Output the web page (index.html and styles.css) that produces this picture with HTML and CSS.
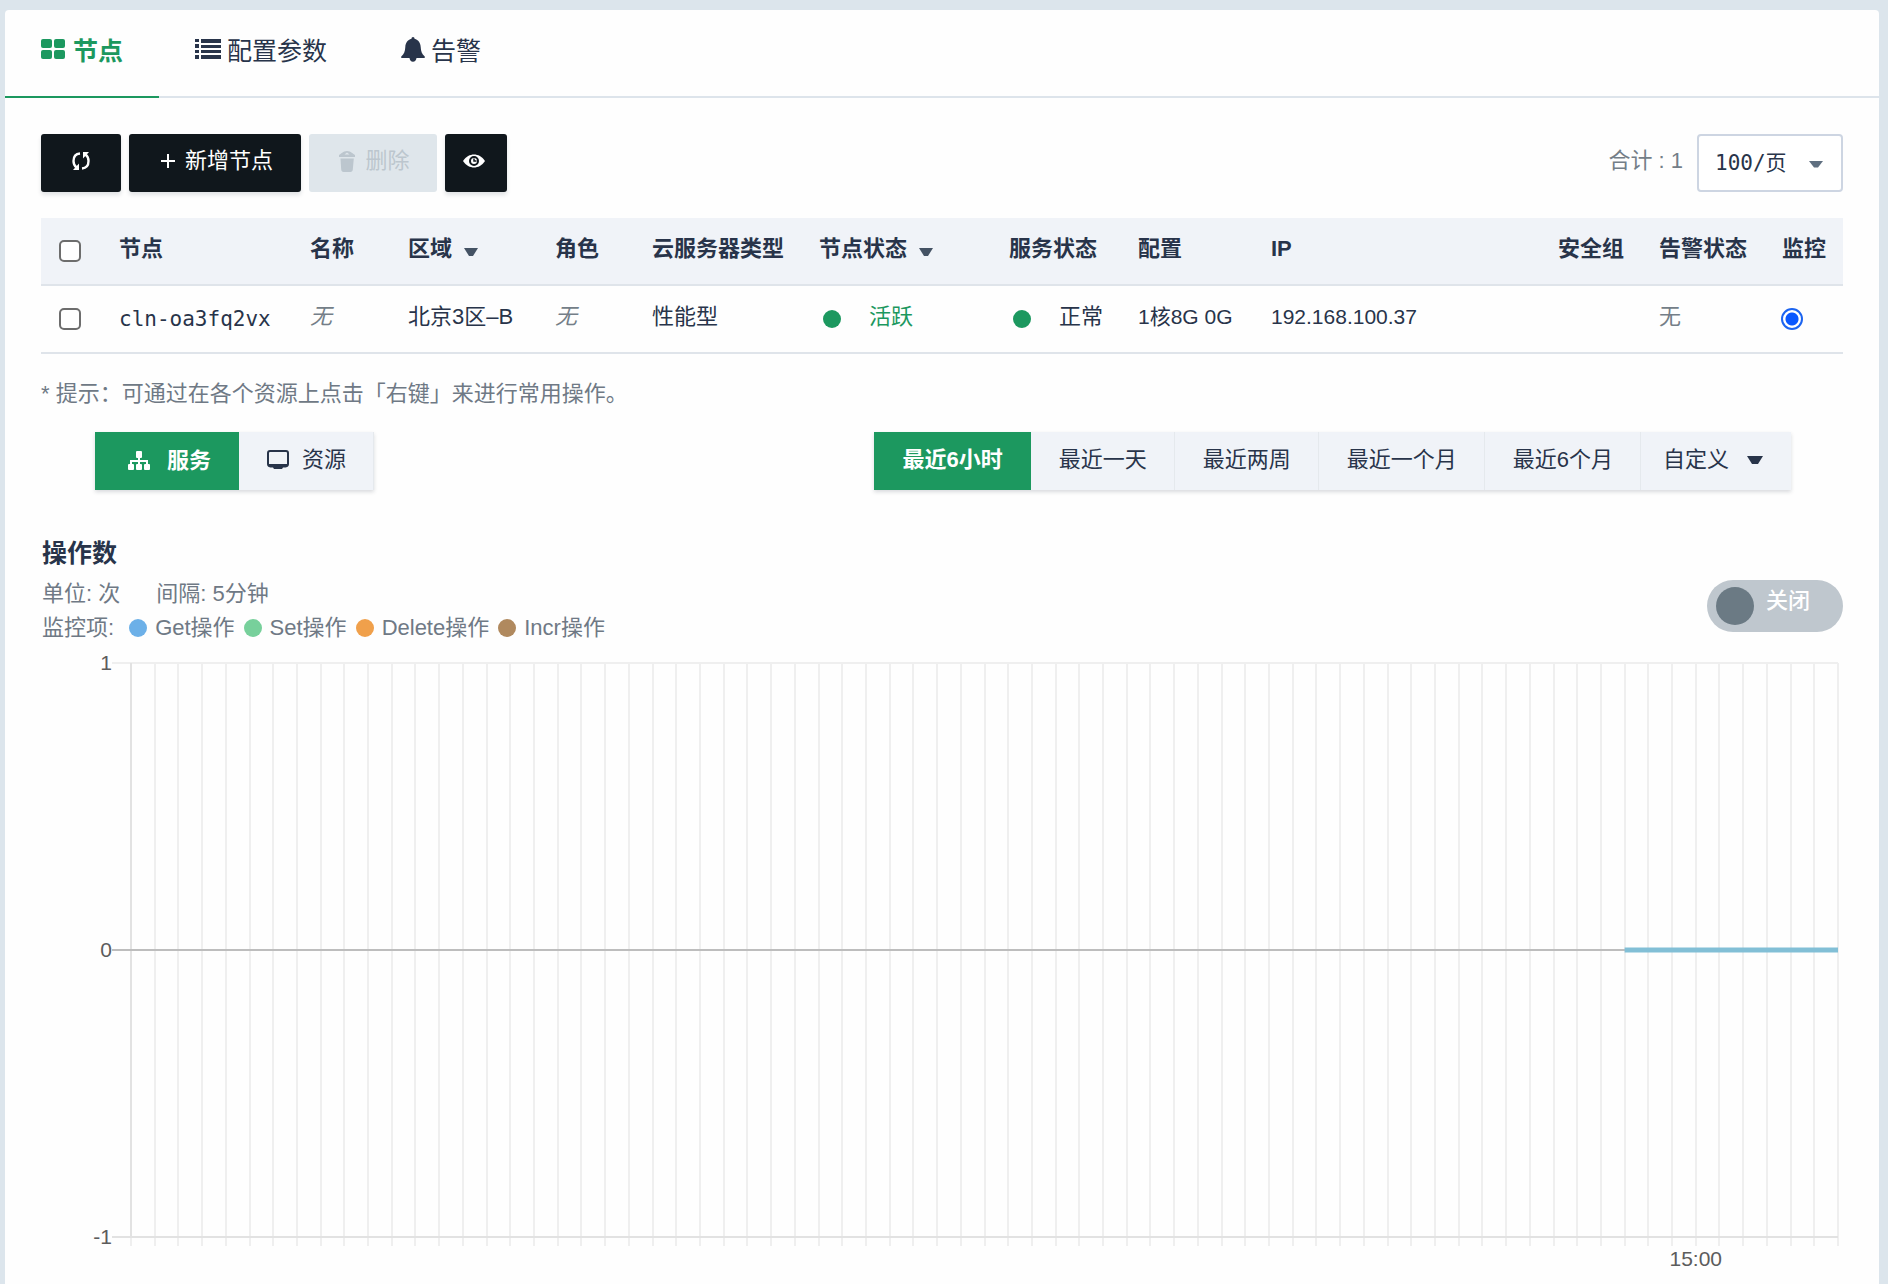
FILE: index.html
```html
<!DOCTYPE html>
<html lang="zh-CN">
<head>
<meta charset="utf-8">
<meta name="viewport" content="width=device-width, initial-scale=1">
<title>节点</title>
<link rel="stylesheet" href="styles.css">
</head>
<body>
<main class="card">
  <nav class="tabs">
    <a class="tab tab-active" href="#nodes">
      <svg class="tab-icon" viewBox="0 0 26 26" fill="currentColor"><rect x="0" y="2" width="11" height="9" rx="2"/><rect x="13" y="2" width="11" height="9" rx="2"/><rect x="0" y="13" width="11" height="9" rx="2"/><rect x="13" y="13" width="11" height="9" rx="2"/></svg>
      <span>节点</span>
    </a>
    <a class="tab" href="#params">
      <svg class="tab-icon" viewBox="0 0 26 26" fill="currentColor"><path d="M0 2h4v3H0zM6 2h20v4H6zM0 7h4v4H0zM6 8h20v3H6zM0 13h4v3H0zM6 13h20v3H6zM0 18h4v4H0zM6 18h20v4H6z"/></svg>
      <span>配置参数</span>
    </a>
    <a class="tab" href="#alarms">
      <svg class="tab-icon" viewBox="0 0 26 26" fill="currentColor"><path d="M14 0c1 0 1.500.7 1.500 1.800C19.500 3 21.500 6 21.700 10c.2 4.500 1.300 7 3.800 9.200.8.800.5 1.800-.5 1.800h-7.500c-.3 2.200-1.600 3.800-3.500 3.800S10.800 23.200 10.500 21H3c-1 0-1.300-1-.5-1.800C5 17 6.100 14.500 6.300 10c.2-4 2.200-7 6.200-8.200C12.500.7 13 0 14 0z"/></svg>
      <span>告警</span>
    </a>
  </nav>

  <div class="content">
    <div class="toolbar">
      <button class="btn btn-refresh" type="button" aria-label="刷新">
        <svg class="icon-sm" viewBox="0 0 20 20" fill="none" stroke="currentColor" stroke-width="2.400"><path d="M9 2.500C4 3 2.500 6.500 2.500 10c0 2.800 1 5 3 6.500"/><path d="M11 17.500c5-.5 6.500-4 6.500-7.500 0-2.800-1-5-3-6.500"/><path d="M8 12.500V19H2zM12 7.500V1h6z" fill="currentColor" stroke="none"/></svg>
      </button>
      <button class="btn btn-add" type="button">
        <svg class="icon-plus" viewBox="0 0 14 14" stroke="currentColor" stroke-width="2"><path d="M7 0v14M0 7h14"/></svg>
        <span>新增节点</span>
      </button>
      <button class="btn btn-delete" type="button" disabled>
        <svg class="icon-trash" viewBox="0 0 18 22" fill="currentColor"><path d="M1 5C3 4 5 1 9 1s6 3 8 4v2H1zM2.500 8.500h13.300l-1 11c-.1 1.500-1 2.500-2.300 2.500h-7c-1.300 0-2.200-1-2.300-2.500z"/><path d="M6.500 4.500 9 2.500l2.500 2z" fill="#dfe6eb"/></svg>
        <span>删除</span>
      </button>
      <button class="btn btn-view" type="button" aria-label="显示列">
        <svg class="icon-eye" viewBox="0 0 22 16"><path d="M0 8c3-4.500 7-6.500 11-6.500S19 3.500 22 8c-3 4.500-7 6.500-11 6.500S3 12.500 0 8z" fill="currentColor"/><circle cx="11" cy="8" r="4" fill="none" stroke="#10171c" stroke-width="2"/><path d="M11 5.500V8h2.500" fill="none" stroke="#10171c" stroke-width="1.500"/></svg>
      </button>
      <label class="total" for="page-size">合计 : 1</label>
      <span class="select-box">
        <select class="select" id="page-size"><option>100/页</option></select>
        <svg class="select-caret" viewBox="0 0 14 8" fill="currentColor"><path d="M0 0h14L9 6.500H5z"/></svg>
      </span>
    </div>

    <table class="nodes">
      <colgroup>
        <col class="c-check"><col class="c-node"><col class="c-name"><col class="c-zone"><col class="c-role"><col class="c-type"><col class="c-state"><col class="c-service"><col class="c-config"><col class="c-ip"><col class="c-group"><col class="c-alarm"><col class="c-monitor">
      </colgroup>
      <thead>
        <tr>
          <th><input class="check" type="checkbox" aria-label="全选"></th>
          <th>节点</th>
          <th>名称</th>
          <th>区域<svg class="sort-caret" viewBox="0 0 14 8" fill="currentColor"><path d="M0 0h14L9 8H5z"/></svg></th>
          <th>角色</th>
          <th>云服务器类型</th>
          <th>节点状态<svg class="sort-caret" viewBox="0 0 14 8" fill="currentColor"><path d="M0 0h14L9 8H5z"/></svg></th>
          <th>服务状态</th>
          <th>配置</th>
          <th>IP</th>
          <th>安全组</th>
          <th>告警状态</th>
          <th>监控</th>
        </tr>
      </thead>
      <tbody>
        <tr>
          <td><input class="check" type="checkbox" aria-label="选择 cln-oa3fq2vx"></td>
          <td class="mono">cln-oa3fq2vx</td>
          <td class="muted"><em>无</em></td>
          <td>北京3区–B</td>
          <td class="muted"><em>无</em></td>
          <td>性能型</td>
          <td><span class="status status-active">活跃</span></td>
          <td><span class="status">正常</span></td>
          <td class="num">1核8G 0G</td>
          <td class="num">192.168.100.37</td>
          <td></td>
          <td class="muted">无</td>
          <td><input class="radio" type="radio" name="monitor" aria-label="监控 cln-oa3fq2vx" checked></td>
        </tr>
      </tbody>
    </table>

    <p class="hint">* 提示：可通过在各个资源上点击「右键」来进行常用操作。</p>

    <div class="filters">
      <div class="segments">
        <button class="segment segment-active seg-service" type="button">
          <svg class="icon-md" viewBox="0 0 22 20" fill="currentColor"><rect x="8" y="0" width="6" height="7" rx="1"/><rect x="0" y="13" width="6" height="6" rx="1"/><rect x="8" y="13" width="6" height="6" rx="1"/><rect x="16" y="13" width="6" height="6" rx="1"/><path d="M3 13v-3h16v3M11 6v7" fill="none" stroke="currentColor" stroke-width="2"/></svg>
          <span>服务</span>
        </button>
        <button class="segment seg-resource" type="button">
          <svg class="icon-md" viewBox="0 0 22 20"><rect x="1" y="1" width="20" height="15" rx="2" fill="none" stroke="currentColor" stroke-width="2"/><path d="M1 14h20v1c0 1.500-1 2.500-2.500 2.500H16l-1 1.500H7l-1-1.500H3.500C2 17.500 1 16.500 1 15z" fill="currentColor"/></svg>
          <span>资源</span>
        </button>
      </div>
      <div class="segments">
        <button class="segment segment-active" type="button">最近6小时</button>
        <button class="segment" type="button">最近一天</button>
        <button class="segment" type="button">最近两周</button>
        <button class="segment" type="button">最近一个月</button>
        <button class="segment" type="button">最近6个月</button>
        <button class="segment seg-custom" type="button"><span>自定义</span><svg class="custom-caret" viewBox="0 0 16 8" fill="currentColor"><path d="M0 0h16l-5 8H5z"/></svg></button>
      </div>
    </div>

    <section class="monitor">
      <header class="monitor-head">
        <div>
          <h2 class="monitor-title">操作数</h2>
          <p class="meta"><span>单位: 次</span><span class="interval">间隔: 5分钟</span></p>
          <p class="meta">
            <span class="legend-label">监控项:</span>
            <span class="legend legend-get">Get操作</span>
            <span class="legend legend-set">Set操作</span>
            <span class="legend legend-delete">Delete操作</span>
            <span class="legend legend-incr">Incr操作</span>
          </p>
        </div>
        <button class="switch" type="button" role="switch" aria-checked="false"><span class="knob"></span><span class="switch-text">关闭</span></button>
      </header>
      <svg class="chart" id="chart" role="img" aria-label="操作数">
        <g id="grid" class="grid"></g>
        <line class="h-line" x1="-19" x2="100%" y1="12" y2="12"/>
        <line class="h-line axis" x1="-19" x2="100%" y1="586" y2="586"/>
        <line class="v-axis" x1="0" x2="0" y1="12" y2="586"/>
        <line class="zero" x1="-19" x2="100%" y1="299" y2="299"/>
        <line class="series" x1="87.5%" x2="100%" y1="299" y2="299"/>
        <text class="label label-y" x="-19" y="19">1</text>
        <text class="label label-y" x="-19" y="306">0</text>
        <text class="label label-y" x="-19" y="593">-1</text>
        <text class="label label-x" x="91.667%" y="615">15:00</text>
      </svg>
    </section>
  </div>
</main>
<script src="chart.js"></script>
</body>
</html>
```
FILE: styles.css
```css
* { box-sizing: border-box; }

body {
  margin: 0;
  padding: 10px 9px 0 5px;
  background: #dce5ec;
  color: #28344a;
  font: 22px/30px "Liberation Sans", "Noto Sans CJK SC", sans-serif;
}

button, select { font: inherit; color: inherit; }
svg { flex: none; display: block; }

.card {
  min-height: calc(100vh - 10px);
  background: #fefefe;
  border-radius: 4px 4px 0 0;
}

/* Tabs */
.tabs {
  display: flex;
  height: 88px;
  border-bottom: 2px solid #dde4eb;
}
.tab {
  display: flex;
  gap: 6px;
  height: 88px;
  padding: 23px 36px 0;
  border-bottom: 2px solid transparent;
  color: #28344a;
  font-size: 25px;
  line-height: 36px;
  text-decoration: none;
}
.tab-active { color: #1c985f; border-color: #1c985f; font-weight: 700; }
.tab-icon { width: 26px; height: 26px; margin-top: 4px; }

.content { padding: 36px 36px 12px; }

/* Toolbar */
.toolbar { display: flex; align-items: center; gap: 8px; height: 58px; }
.btn {
  display: flex;
  align-items: center;
  justify-content: center;
  height: 58px;
  padding: 0 0 4px;
  border: 0;
  border-radius: 3px;
  background: #10171c;
  color: #fff;
  box-shadow: 0 3px 4px rgba(20, 30, 50, .12);
}
.btn-refresh { width: 80px; }
.btn-add { width: 172px; gap: 10px; padding-left: 4px; }
.btn-delete { width: 128px; gap: 9px; padding-left: 2px; background: #dfe6eb; color: #bcc6ce; box-shadow: none; }
.btn-view { width: 62px; padding-right: 4px; }
.icon-sm { width: 20px; height: 20px; }
.icon-plus { width: 14px; height: 14px; }
.icon-trash { width: 18px; height: 22px; }
.icon-eye { width: 22px; height: 16px; }
.total { margin-left: auto; padding: 0 6px 4px 0; color: #747e88; }
.select-box { display: grid; align-items: center; width: 146px; }
.select {
  grid-area: 1 / 1;
  width: 100%;
  height: 58px;
  padding: 0 16px;
  border: 2px solid #cdd5e2;
  border-radius: 4px;
  background: #fff;
  appearance: none;
  font-family: "DejaVu Sans Mono", "Noto Sans CJK SC", monospace;
  font-size: 21px;
}
.select-caret {
  grid-area: 1 / 1;
  justify-self: end;
  width: 14px;
  height: 8px;
  margin: 4px 20px 0 0;
  color: #5f6f80;
  pointer-events: none;
}

/* Node table */
.nodes { width: 100%; margin-top: 26px; table-layout: fixed; border-collapse: separate; border-spacing: 0; }
.nodes th, .nodes td {
  height: 68px;
  padding: 0 0 4px 18px;
  border-bottom: 2px solid #dfe4ea;
  text-align: left;
  white-space: nowrap;
}
.nodes th { background: #f0f3f8; font-weight: 700; }
.nodes .mono { font-family: "DejaVu Sans Mono", monospace; font-size: 21px; padding-bottom: 0; }
.nodes .num { font-size: 21px; }
.nodes .muted { color: #747e88; }
.c-check { width: 60px; }
.c-node { width: 191px; }
.c-name { width: 98px; }
.c-zone { width: 147px; }
.c-role { width: 97px; }
.c-type { width: 167px; }
.c-state { width: 190px; }
.c-service { width: 129px; }
.c-config { width: 133px; }
.c-ip { width: 287px; }
.c-group { width: 101px; }
.c-alarm { width: 123px; }
.c-monitor { width: 79px; }
.sort-caret { display: inline-block; width: 14px; height: 8px; margin-left: 12px; color: #445264; }
.check, .radio {
  display: block;
  width: 22px;
  height: 22px;
  margin: 4px 0 0;
  border: 2px solid #6d6d6d;
  border-radius: 5px;
  background: #fff;
  appearance: none;
}
.radio { margin-left: -1px; border-color: #1c64f0; border-radius: 50%; }
.radio:checked { background: radial-gradient(circle, #0a58ff 6px, #fff 7px); }
.status { display: flex; align-items: center; gap: 28px; padding-left: 4px; }
.status::before { content: ""; width: 18px; height: 18px; margin-top: 4px; border-radius: 50%; background: #1c985f; }
.status-active { color: #1c985f; }

.hint { margin: 25px 0 23px; color: #6f7985; }

/* Segmented controls */
.filters { display: flex; justify-content: space-between; padding: 0 52px 0 54px; }
.segments { display: flex; box-shadow: 0 2px 4px rgba(20, 30, 50, .16); }
.segment {
  display: flex;
  align-items: center;
  height: 58px;
  padding: 0 28px 2px;
  border: 0;
  box-shadow: inset -1px 0 #e5e9ed;
  background: #f0f3f8;
  white-space: nowrap;
}
.segment-active { background: #1c985f; color: #fff; font-weight: 700; box-shadow: none; }
.seg-service { width: 144px; padding: 0 0 0 33px; gap: 17px; }
.seg-resource { width: 135px; gap: 13px; }
.icon-md { width: 22px; height: 20px; }
.seg-custom { gap: 18px; padding-left: 22px; box-shadow: none; }
.custom-caret { width: 16px; height: 8px; }

/* Monitoring chart */
.monitor { margin-top: 45px; }
.monitor-head { display: flex; justify-content: space-between; align-items: center; padding-left: 1px; }
.monitor-title { margin: 0 0 6px; font-size: 25px; line-height: 36px; font-weight: 700; }
.meta { display: flex; margin: 0; line-height: 34px; color: #6f7985; }
.interval { margin-left: 36px; }
.legend-label { margin-right: 15px; }
.legend { display: flex; align-items: center; gap: 8px; margin-right: 9px; }
.legend::before { content: ""; width: 18px; height: 18px; border-radius: 50%; }
.legend-get::before { background: #6cb0e8; }
.legend-set::before { background: #77d09b; }
.legend-delete::before { background: #f0a04b; }
.legend-incr::before { background: #b0895e; }
.switch {
  display: flex;
  align-items: center;
  gap: 12px;
  width: 136px;
  height: 52px;
  margin-top: 32px;
  padding: 0 9px;
  border: 0;
  border-radius: 26px;
  background: #bfc7ce;
  color: #fff;
}
.knob { width: 38px; height: 38px; border-radius: 50%; background: #6b7a84; }
.switch-text { padding-bottom: 10px; font-weight: 500; }

.chart { width: calc(100% - 95px); height: 624px; margin: 6px 5px 0 90px; overflow: visible; }
.grid line { stroke: #efefef; stroke-width: 2; shape-rendering: crispEdges; }
.h-line { stroke: #efefef; stroke-width: 2; }
.axis, .v-axis { stroke: #e2e2e2; stroke-width: 2; }
.zero { stroke: #bdbdbd; stroke-width: 2; }
.series { stroke: #82bfd6; stroke-width: 5; }
.label { fill: #5c5c5c; font-size: 21px; }
.label-y { text-anchor: end; }
.label-x { text-anchor: middle; }
```
FILE: chart.js
```js
// One grid line for every five minutes of the six-hour range.
const grid = document.getElementById("grid");
const steps = 72;
for (let i = 0; i <= steps; i++) {
  const line = document.createElementNS("http://www.w3.org/2000/svg", "line");
  const x = (i / steps) * 100 + "%";
  line.setAttribute("x1", x);
  line.setAttribute("x2", x);
  line.setAttribute("y1", 12);
  line.setAttribute("y2", 595);
  grid.appendChild(line);
}
```
